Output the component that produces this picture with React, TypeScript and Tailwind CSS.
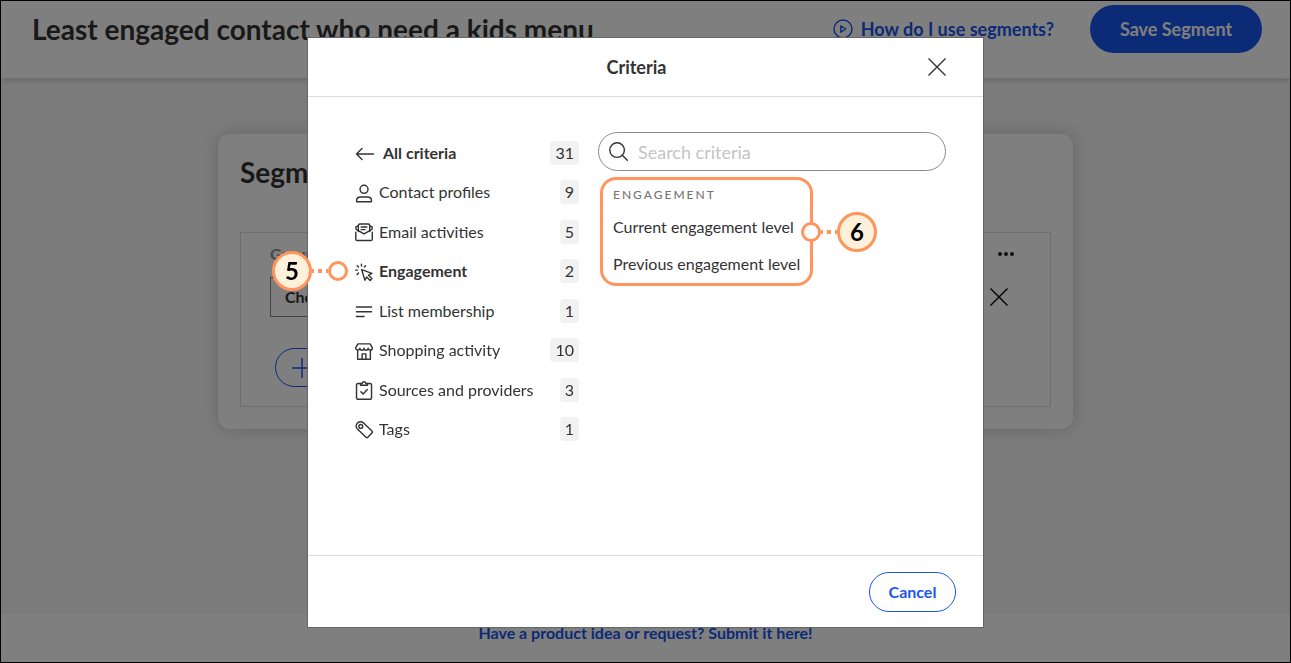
import type { ReactNode } from "react";

function Icon({ children }: { children: ReactNode }) {
  return (
    <svg
      viewBox="0 0 20 20"
      className="mt-0.5 size-[19px] shrink-0"
      fill="none"
      stroke="currentColor"
      strokeWidth="1.5"
      strokeLinecap="round"
      strokeLinejoin="round"
      aria-hidden="true"
    >
      {children}
    </svg>
  );
}

function CloseIcon() {
  return (
    <svg viewBox="0 0 18 18" className="size-[18px]" fill="none" stroke="currentColor" strokeWidth="1.4" aria-hidden="true">
      <path d="M.5.5l17 17M17.5.5l-17 17" />
    </svg>
  );
}

const criteria = [
  {
    name: "Contact profiles",
    count: 9,
    icon: (
      <>
        <circle cx="9.500" cy="5.600" r="4.200" />
        <path d="M1.700 18.700v-1.600c0-2.400 2-3.400 4.200-3.400h7.200c2.200 0 4.200 1 4.200 3.400v1.600z" />
      </>
    ),
  },
  {
    name: "Email activities",
    count: 5,
    icon: (
      <>
        <path d="M3.500 9V2.700c0-1 .6-1.700 1.600-1.700h8.800c1 0 1.600.7 1.600 1.700V9M6.500 4.300h6M6.500 7h4" />
        <path d="M3.500 3.500h-1C1.300 3.500.8 4.300.8 5.300s.7 1.800 1.700 2.200l7 4 7-4c1-.4 1.700-1.200 1.700-2.200s-.5-1.800-1.700-1.800h-1" />
        <path d="M.8 9.800v7c0 1 .7 1.700 1.700 1.700h14c1 0 1.700-.7 1.700-1.700v-7" />
      </>
    ),
  },
  {
    name: "Engagement",
    count: 2,
    icon: (
      <>
        <path d="M7 7l10.800 4-3.600 1.800 3.600 3.600-1.900 1.900-3.600-3.600-1.800 3.400z" />
        <path d="M6.800 1.200v2M2.300 2.800l1.400 1.400M.8 7.500h1.700M3.700 10.600l-1.500 1.500M11.100 2.800L9.800 4.200" />
      </>
    ),
  },
  {
    name: "List membership",
    count: 1,
    icon: <path d="M1.500 5.300h16M1.500 10.300h16M1.500 15.300h8" />,
  },
  {
    name: "Shopping activity",
    count: 10,
    icon: (
      <>
        <path d="M3.100 2h12.800l2.400 4.200c0 3-3.900 3-4.400.4-.5 2.700-3.900 2.700-4.400 0-.5 2.700-3.900 2.700-4.400 0-.5 2.600-4.400 2.600-4.400-.4z" />
        <path d="M2.800 9v9.200h13.400V9M7.500 18v-5.500h4V18" />
      </>
    ),
  },
  {
    name: "Sources and providers",
    count: 3,
    icon: (
      <>
        <path d="M5.800 2.600H3.200c-1 0-1.600.6-1.600 1.600v13.500c0 1 .6 1.600 1.600 1.600h12.600c1 0 1.600-.6 1.600-1.600V4.200c0-1-.6-1.600-1.600-1.600h-2.600" />
        <path d="M5.800 2.600v1.800h7.400V2.600h-1.700C11.200 1.400 10.500.8 9.500.8s-1.700.6-2 1.800zM6.200 11.200l2.400 2.400 4.300-4.600" />
      </>
    ),
  },
  {
    name: "Tags",
    count: 1,
    icon: (
      <>
        <path d="M1.200 6.800c0-3 2-4.900 4.700-4.900 1.200 0 2 .3 2.900 1.100l9 8.600c.7.700.7 1.300 0 2l-4.300 4.500c-.6.6-1.300.6-1.900 0L2.500 9.500c-.9-.9-1.300-1.600-1.300-2.700z" />
        <circle cx="6.100" cy="6.800" r="2" />
      </>
    ),
  },
];

function Count({ value }: { value: number }) {
  return <span className="h-6 rounded bg-[#f2f2f2] px-[5px] text-base leading-6">{value}</span>;
}

// numbered bubble joined to a ring by a dotted line
function Callout({ step, className }: { step: number; className: string }) {
  return (
    <span className={`absolute top-1/2 flex -translate-y-1/2 items-center ${className}`}>
      <span className="flex size-10 items-center justify-center rounded-full border-3 border-[#ff945c] bg-[#fff0dc] text-2xl font-bold text-black">
        {step}
      </span>
      <span className="flex w-4 justify-between">
        <i className="h-1 w-0.5 bg-[#ff945c]" />
        <i className="size-1 bg-[#ff945c]" />
        <i className="h-1 w-0.5 bg-[#ff945c]" />
      </span>
      <span className="size-5 rounded-full border-3 border-[#ff945c] bg-white" />
    </span>
  );
}

function SegmentPage() {
  return (
    <div className="flex min-h-screen flex-col border border-black bg-[#f7f7f7]">
      <header className="flex h-[78px] items-start justify-between border-b border-[#e4e4e4] bg-white pt-1 pr-7 pl-[31px] shadow-md">
        <h1 className="pt-1.5 text-[28px] leading-9 font-bold text-[#333]">
          Least engaged contact who need a kids menu
        </h1>
        <div className="flex items-center gap-9">
          <a href="#help" className="flex items-center gap-2 text-lg font-bold text-[#1856ed]">
            <svg viewBox="0 0 20 20" className="size-5" fill="none" stroke="currentColor" strokeWidth="1.4" strokeLinejoin="round" aria-hidden="true">
              <circle cx="10" cy="10" r="9" />
              <path d="M7.800 6.800v6.400l5-3.200z" />
            </svg>
            How do I use segments?
          </a>
          <button type="button" className="h-12 w-[172px] rounded-full bg-[#1856ed] text-lg font-bold text-white">
            Save Segment
          </button>
        </div>
      </header>

      <main className="flex-1 px-8 pt-[55px]">
        <section className="mx-auto max-w-[855px] rounded-xl bg-white px-[22px] pt-5 pb-[22px] shadow-[0_0_18px_rgba(0,0,0,0.18)]">
          <h2 className="text-[28px] leading-9 font-bold text-[#333]">Segment</h2>
          <div className="mt-[42px] border border-[#dcdcdc] pt-[9px] pr-9 pb-[19px] pl-[29px]">
            <div className="flex items-center justify-between">
              <span className="text-base leading-6 font-bold text-[#8c8c8c]">Group</span>
              <button type="button" aria-label="Group options" className="flex gap-0.5">
                <i className="size-1 rounded-full bg-[#222]" />
                <i className="size-1 rounded-full bg-[#222]" />
                <i className="size-1 rounded-full bg-[#222]" />
              </button>
            </div>
            <div className="mt-[11px] flex items-center justify-between pr-1.5">
              <button type="button" className="h-10 w-52 border border-[#888] pl-3.5 text-left text-base font-bold text-[#333]">
                Choose
              </button>
              <button type="button" aria-label="Remove condition">
                <CloseIcon />
              </button>
            </div>
            <button type="button" aria-label="Add condition" className="mt-[31px] ml-[5px] flex h-[39px] w-40 items-center rounded-full border border-[#1856ed] pl-4 text-[#1856ed]">
              <svg viewBox="0 0 20 20" className="size-5" stroke="currentColor" strokeWidth="1.4" aria-hidden="true">
                <path d="M10 0v20M0 10h20" />
              </svg>
            </button>
          </div>
        </section>
      </main>

      <footer className="h-12 bg-white pt-[7px] text-center">
        <a href="#ideas" className="text-base leading-6 font-bold text-[#1856ed]">
          Have a product idea or request? Submit it here!
        </a>
      </footer>
    </div>
  );
}

function CriteriaDialog() {
  return (
    <div role="dialog" aria-labelledby="criteria-title" className="w-full max-w-[677px] border border-[#666] bg-white text-[#333]">
      <header className="relative flex h-[59px] items-center justify-center border-b border-[#dcdcdc] pr-[18px]">
        <h2 id="criteria-title" className="text-lg font-bold">
          Criteria
        </h2>
        <button type="button" aria-label="Close" className="absolute right-[37px]">
          <CloseIcon />
        </button>
      </header>

      <div className="flex min-h-[458px] gap-[19px] pr-[37px] pl-[47px]">
        <ul className="mt-11 flex h-[300px] w-56 shrink-0 flex-col justify-between">
          <li className="flex items-center justify-between">
            <button type="button" className="flex items-center gap-2 text-base font-bold">
              <svg viewBox="0 0 20 20" className="mt-0.5 size-5" fill="none" stroke="currentColor" strokeWidth="1.4" strokeLinecap="round" strokeLinejoin="round" aria-hidden="true">
                <path d="M18.500 10h-17M7 4.500L1.500 10 7 15.500" />
              </svg>
              All criteria
            </button>
            <Count value={31} />
          </li>
          {criteria.map(({ name, count, icon }) => (
            <li key={name} className="relative flex items-center justify-between">
              {name === "Engagement" && <Callout step={5} className="right-full mr-[7px]" />}
              <button
                type="button"
                className={`flex items-center gap-[5px] text-base ${name === "Engagement" ? "font-bold" : ""}`}
              >
                <Icon>{icon}</Icon>
                {name}
              </button>
              <Count value={count} />
            </li>
          ))}
        </ul>

        <div className="flex-1 pt-[35px]">
          <div className="flex h-[39px] items-center gap-2.5 rounded-full border border-[#8c8c8c] px-2.5">
            <svg viewBox="0 0 20 20" className="size-[19px] shrink-0" fill="none" stroke="currentColor" strokeWidth="1.500" strokeLinecap="round" aria-hidden="true">
              <circle cx="8.500" cy="8.500" r="7.700" />
              <path d="M14 14l5.300 5.300" />
            </svg>
            <input
              type="search"
              aria-label="Search criteria"
              placeholder="Search criteria"
              className="w-full bg-transparent text-lg outline-none placeholder:text-[#c4c4c4]"
            />
          </div>

          <div className="relative mt-1.5 ml-0.5 w-[213px] rounded-2xl border-3 border-[#ff945c] px-2.5 py-[7px]">
            <h3 className="text-xs leading-4 font-medium tracking-[2px] text-[#767676]">ENGAGEMENT</h3>
            <button type="button" className="mt-3 block text-base leading-6 whitespace-nowrap">
              Current engagement level
            </button>
            <button type="button" className="mt-[13px] block text-base leading-6 whitespace-nowrap">
              Previous engagement level
            </button>
            <Callout step={6} className="left-full -ml-[9px] flex-row-reverse" />
          </div>
        </div>
      </div>

      <footer className="flex justify-end border-t border-[#dcdcdc] pt-4 pr-[27px] pb-[15px]">
        <button type="button" className="h-10 w-[87px] rounded-full border border-[#1856ed] text-base font-bold text-[#1856ed]">
          Cancel
        </button>
      </footer>
    </div>
  );
}

export default function App() {
  return (
    <div className="font-['Lato',sans-serif]">
      <SegmentPage />
      <div className="fixed inset-0 flex items-center justify-center bg-black/50 pt-0.5">
        <CriteriaDialog />
      </div>
    </div>
  );
}
